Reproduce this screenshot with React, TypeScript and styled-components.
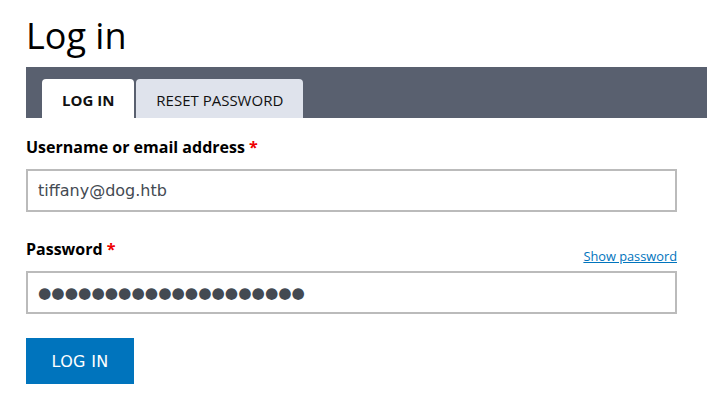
import styled, { createGlobalStyle } from 'styled-components'

const GlobalStyle = createGlobalStyle`
  html, body {
    margin: 0;
    padding: 0;
    background: #ffffff;
    overflow: hidden;
  }
  body {
    font-family: 'DejaVu Sans', sans-serif;
  }
`

const tabs = [
  { label: 'LOG IN', active: true },
  { label: 'RESET PASSWORD', active: false },
]

// masked value, drawn with the large round bullet the reference shows
const maskedPassword = '●'.repeat(20)

const App = () => {
  return (
    <>
      <GlobalStyle />
      <Page>
        <Title>Log in</Title>
        <TabBar>
          {tabs.map((tab) => (
            <Tab key={tab.label} active={tab.active}>
              {tab.label}
            </Tab>
          ))}
        </TabBar>
        <Form onSubmit={(e) => e.preventDefault()}>
          <Field>
            <LabelRow>
              <Label htmlFor="name">
                Username or email address <Required>*</Required>
              </Label>
            </LabelRow>
            <Input id="name" type="text" defaultValue="tiffany@dog.htb" />
          </Field>
          <Field>
            <LabelRow>
              <Label htmlFor="pass">
                Password <Required>*</Required>
              </Label>
              <ShowPassword href="#">Show password</ShowPassword>
            </LabelRow>
            <Input id="pass" type="text" readOnly masked defaultValue={maskedPassword} />
          </Field>
          <Submit type="submit">LOG IN</Submit>
        </Form>
      </Page>
    </>
  )
}

export default App

const Page = styled.div`
  display: flex;
  flex-direction: column;
  padding-left: 26px;
`
const Title = styled.h1`
  margin: 12px 0 0;
  font-family: 'Open Sans', sans-serif;
  font-size: 36px;
  font-weight: 400;
  line-height: 48px;
  color: #000000;
`
const TabBar = styled.div`
  display: flex;
  align-items: flex-end;
  gap: 2px;
  height: 51px;
  margin-top: 7px;
  padding-left: 16px;
  background: #59606f;
`
const Tab = styled.div<{ active: boolean }>`
  display: flex;
  align-items: center;
  height: 39px;
  padding: 3px 20px 0;
  box-sizing: border-box;
  border-radius: 4px 4px 0 0;
  background: ${(props) => (props.active ? '#ffffff' : '#dfe3ec')};
  color: #111111;
  font-family: 'Open Sans', sans-serif;
  font-size: 15px;
  font-weight: ${(props) => (props.active ? 700 : 400)};
`
const Form = styled.form`
  display: flex;
  flex-direction: column;
  width: 651px;
  padding-top: 18px;
`
const Field = styled.div`
  display: flex;
  flex-direction: column;
  margin-bottom: 26px;
`
const LabelRow = styled.div`
  display: flex;
  justify-content: space-between;
  align-items: flex-end;
  height: 22px;
  margin-bottom: 11px;
`
const Label = styled.label`
  font-family: 'Open Sans', sans-serif;
  font-size: 16px;
  font-weight: 700;
  line-height: 22px;
  color: #000000;
`
const Required = styled.span`
  color: #ee0000;
`
const ShowPassword = styled.a`
  font-family: 'Open Sans', sans-serif;
  font-size: 12.8px;
  line-height: 16px;
  color: #0074bd;
  text-decoration: underline;
  margin-bottom: -4px;
`
const Input = styled.input<{ masked?: boolean }>`
  box-sizing: border-box;
  width: 100%;
  height: 43px;
  margin: 0;
  padding: 0 10px;
  border: 2px solid #bbbbbb;
  border-radius: 0;
  outline: none;
  font-family: 'DejaVu Sans', sans-serif;
  font-size: ${(props) => (props.masked ? '15.3px' : '16px')};
  color: #444a52;
  background: #ffffff;
`
const Submit = styled.button`
  align-self: flex-start;
  width: 108px;
  height: 46px;
  margin-top: -2px;
  border: none;
  border-radius: 0;
  background: #0074bd;
  color: #ffffff;
  font-family: 'DejaVu Sans', sans-serif;
  font-size: 16px;
  letter-spacing: 0.3px;
  cursor: pointer;
`
